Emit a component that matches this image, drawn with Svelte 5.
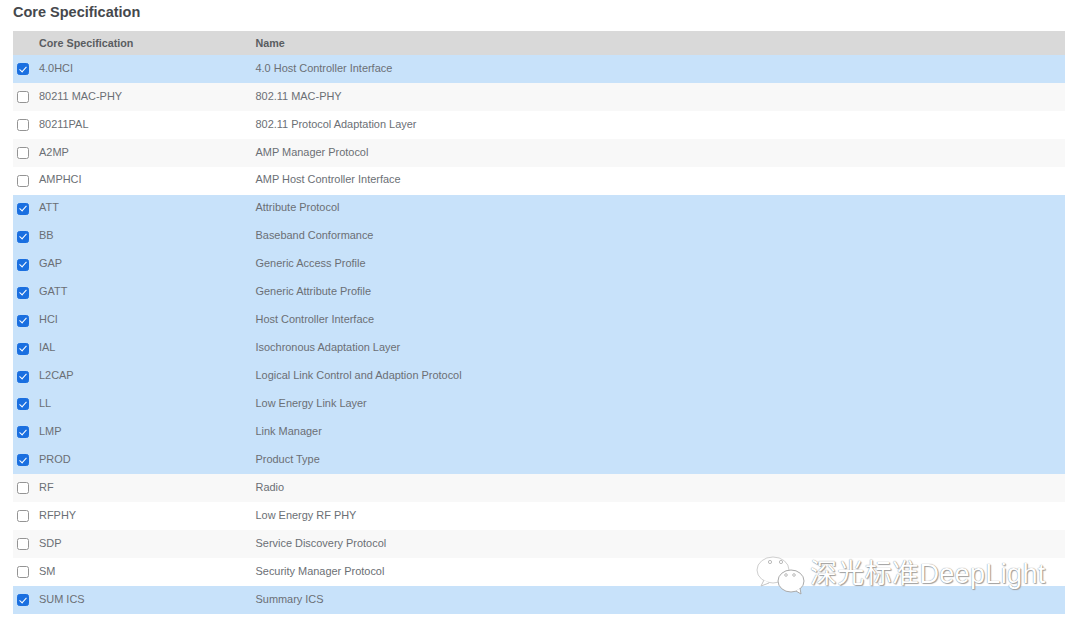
<script lang="ts">
  const rows = [
    { spec: '4.0HCI', name: '4.0 Host Controller Interface', on: true },
    { spec: '80211 MAC-PHY', name: '802.11 MAC-PHY', on: false },
    { spec: '80211PAL', name: '802.11 Protocol Adaptation Layer', on: false },
    { spec: 'A2MP', name: 'AMP Manager Protocol', on: false },
    { spec: 'AMPHCI', name: 'AMP Host Controller Interface', on: false },
    { spec: 'ATT', name: 'Attribute Protocol', on: true },
    { spec: 'BB', name: 'Baseband Conformance', on: true },
    { spec: 'GAP', name: 'Generic Access Profile', on: true },
    { spec: 'GATT', name: 'Generic Attribute Profile', on: true },
    { spec: 'HCI', name: 'Host Controller Interface', on: true },
    { spec: 'IAL', name: 'Isochronous Adaptation Layer', on: true },
    { spec: 'L2CAP', name: 'Logical Link Control and Adaption Protocol', on: true },
    { spec: 'LL', name: 'Low Energy Link Layer', on: true },
    { spec: 'LMP', name: 'Link Manager', on: true },
    { spec: 'PROD', name: 'Product Type', on: true },
    { spec: 'RF', name: 'Radio', on: false },
    { spec: 'RFPHY', name: 'Low Energy RF PHY', on: false },
    { spec: 'SDP', name: 'Service Discovery Protocol', on: false },
    { spec: 'SM', name: 'Security Manager Protocol', on: false },
    { spec: 'SUM ICS', name: 'Summary ICS', on: true },
  ]
</script>

<main class="page">
  <h2>Core Specification</h2>
  <div class="table">
    <div class="row head">
      <span class="box"></span>
      <span class="spec">Core Specification</span>
      <span>Name</span>
    </div>
    {#each rows as row, i (row.spec)}
      <div class="row" class:on={row.on} class:odd={!row.on && i % 2 === 1}>
        <span class="box">
          <input type="checkbox" checked={row.on} />
        </span>
        <span class="spec">{row.spec}</span>
        <span>{row.name}</span>
      </div>
    {/each}
  </div>

  <div class="mark">
    <svg width="50" height="42" viewBox="0 0 50 42" fill="none">
      <ellipse cx="17" cy="17" rx="16" ry="13" fill="#fff" stroke="#cfcfcf" stroke-width="1" />
      <path d="M8 27l-3 6 8-3" fill="#fff" stroke="#c4c4c4" stroke-width="1" />
      <ellipse cx="35" cy="28" rx="13" ry="11" fill="#fff" stroke="#aaa" stroke-width="1" />
      <path d="M40 38l5 3-1-6" fill="#fff" stroke="#aaa" stroke-width="1" />
      <circle cx="14" cy="9" r="1.6" fill="#fff" stroke="#aaa" stroke-width=".8" />
      <circle cx="25" cy="9" r="1.6" fill="#fff" stroke="#aaa" stroke-width=".8" />
      <circle cx="30" cy="22" r="1.3" fill="#fff" stroke="#aaa" stroke-width=".8" />
      <circle cx="38" cy="22" r="1.3" fill="#fff" stroke="#aaa" stroke-width=".8" />
    </svg>
    <span>深光标准DeepLight</span>
  </div>
</main>

<style>
  :global(body) {
    margin: 0;
    background: #fff;
  }
  .page {
    position: relative;
    height: 624px;
    box-sizing: border-box;
    padding: 4px 15px 0 13px;
    overflow: hidden;
    font-family: 'Liberation Sans', Arial, sans-serif;
    color: #6b6f75;
  }
  h2 {
    margin: 0;
    height: 27px;
    font-size: 14.5px;
    line-height: 17px;
    font-weight: 700;
    color: #45484c;
  }
  .row {
    display: flex;
    align-items: center;
    height: 27.95px;
    font-size: 10.95px;
    padding-bottom: 2.5px;
    box-sizing: border-box;
  }
  .row.head {
    height: 24px;
    padding-bottom: 0;
    background: #d9d9d9;
    font-weight: 700;
    color: #5a5d61;
    font-size: 10.75px;
  }
  .row.on {
    background: #c8e2fa;
  }
  .row.odd {
    background: #f8f8f8;
  }
  .box {
    width: 26px;
    flex: none;
    display: flex;
    padding-left: 4px;
    box-sizing: border-box;
  }
  .box input {
    appearance: none;
    position: relative;
    width: 12px;
    height: 12px;
    margin: 3px 0 0;
    box-sizing: border-box;
    border: 1px solid #949494;
    border-radius: 2.5px;
    background: #fff;
  }
  .box input:checked {
    border-color: #1a6fe0;
    background: #1a6fe0;
  }
  .box input:checked::after {
    content: '';
    position: absolute;
    left: 3px;
    top: 0.5px;
    width: 3px;
    height: 6px;
    border: solid #fff;
    border-width: 0 1.8px 1.8px 0;
    transform: rotate(42deg);
  }
  .spec {
    width: 216.5px;
    flex: none;
  }
  .mark {
    position: absolute;
    left: 756px;
    top: 553px;
    display: flex;
    align-items: center;
    gap: 4px;
    font-size: 27px;
    line-height: 38px;
    letter-spacing: 0.35px;
    color: #fff;
    font-family: 'Liberation Sans', 'Noto Sans CJK SC', sans-serif;
    text-shadow: 0 0 1px #6f6f6f, 1px 1px 1px #a5a5a5;
  }
</style>
